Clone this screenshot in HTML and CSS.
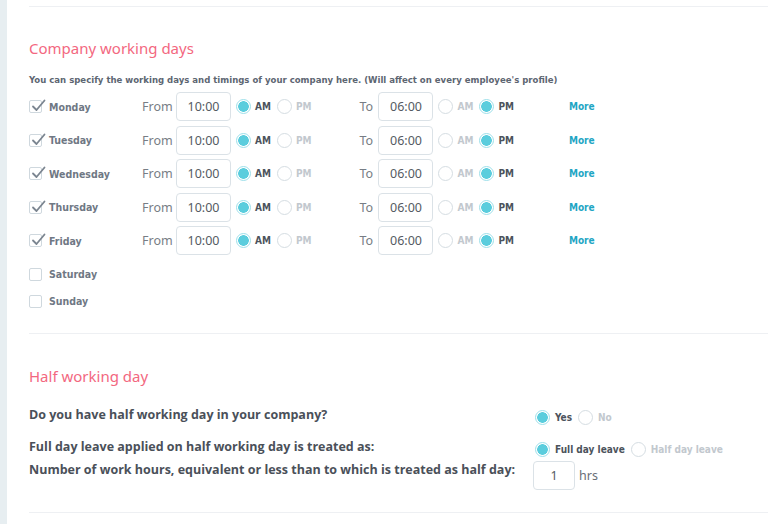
FILE: index.html
```html
<!DOCTYPE html>
<html>
<head>
<meta charset="utf-8">
<link rel="stylesheet" href="styles.css">
</head>
<body>
<div class="page">
  <div class="strip"></div>
  <div class="main">
    <div class="sep"></div>

    <h2 class="title t1">Company working days</h2>
    <p class="desc">You can specify the working days and timings of your company here. (Will affect on every employee's profile)</p>

    <div class="days">
      <div class="day">
        <label class="chk"><span class="box"><svg viewBox="0 0 16 16" width="16" height="16"><path d="M3 8.5 L6.5 12 L14.5 2.5" fill="none" stroke="#7b8590" stroke-width="1.8" stroke-linecap="round" stroke-linejoin="round"/></svg></span><span class="dname">Monday</span></label>
        <span class="lbl from">From</span><span class="tbox">10:00</span>
        <span class="radio on"></span><span class="rl on">AM</span><span class="radio"></span><span class="rl">PM</span>
        <span class="lbl to">To</span><span class="tbox">06:00</span>
        <span class="radio"></span><span class="rl">AM</span><span class="radio on"></span><span class="rl on">PM</span>
        <a class="more">More</a>
      </div>
      <div class="day">
        <label class="chk"><span class="box"><svg viewBox="0 0 16 16" width="16" height="16"><path d="M3 8.5 L6.5 12 L14.5 2.5" fill="none" stroke="#7b8590" stroke-width="1.8" stroke-linecap="round" stroke-linejoin="round"/></svg></span><span class="dname">Tuesday</span></label>
        <span class="lbl from">From</span><span class="tbox">10:00</span>
        <span class="radio on"></span><span class="rl on">AM</span><span class="radio"></span><span class="rl">PM</span>
        <span class="lbl to">To</span><span class="tbox">06:00</span>
        <span class="radio"></span><span class="rl">AM</span><span class="radio on"></span><span class="rl on">PM</span>
        <a class="more">More</a>
      </div>
      <div class="day">
        <label class="chk"><span class="box"><svg viewBox="0 0 16 16" width="16" height="16"><path d="M3 8.5 L6.5 12 L14.5 2.5" fill="none" stroke="#7b8590" stroke-width="1.8" stroke-linecap="round" stroke-linejoin="round"/></svg></span><span class="dname">Wednesday</span></label>
        <span class="lbl from">From</span><span class="tbox">10:00</span>
        <span class="radio on"></span><span class="rl on">AM</span><span class="radio"></span><span class="rl">PM</span>
        <span class="lbl to">To</span><span class="tbox">06:00</span>
        <span class="radio"></span><span class="rl">AM</span><span class="radio on"></span><span class="rl on">PM</span>
        <a class="more">More</a>
      </div>
      <div class="day">
        <label class="chk"><span class="box"><svg viewBox="0 0 16 16" width="16" height="16"><path d="M3 8.5 L6.5 12 L14.5 2.5" fill="none" stroke="#7b8590" stroke-width="1.8" stroke-linecap="round" stroke-linejoin="round"/></svg></span><span class="dname">Thursday</span></label>
        <span class="lbl from">From</span><span class="tbox">10:00</span>
        <span class="radio on"></span><span class="rl on">AM</span><span class="radio"></span><span class="rl">PM</span>
        <span class="lbl to">To</span><span class="tbox">06:00</span>
        <span class="radio"></span><span class="rl">AM</span><span class="radio on"></span><span class="rl on">PM</span>
        <a class="more">More</a>
      </div>
      <div class="day">
        <label class="chk"><span class="box"><svg viewBox="0 0 16 16" width="16" height="16"><path d="M3 8.5 L6.5 12 L14.5 2.5" fill="none" stroke="#7b8590" stroke-width="1.8" stroke-linecap="round" stroke-linejoin="round"/></svg></span><span class="dname">Friday</span></label>
        <span class="lbl from">From</span><span class="tbox">10:00</span>
        <span class="radio on"></span><span class="rl on">AM</span><span class="radio"></span><span class="rl">PM</span>
        <span class="lbl to">To</span><span class="tbox">06:00</span>
        <span class="radio"></span><span class="rl">AM</span><span class="radio on"></span><span class="rl on">PM</span>
        <a class="more">More</a>
      </div>
      <div class="day off first-off">
        <label class="chk"><span class="box"></span><span class="dname">Saturday</span></label>
      </div>
      <div class="day off">
        <label class="chk"><span class="box"></span><span class="dname">Sunday</span></label>
      </div>
    </div>

    <div class="sep sep2"></div>

    <h2 class="title t2">Half working day</h2>

    <div class="q-row q1">
      <div class="q-label">Do you have half working day in your company?</div>
      <div class="q-ctrl">
        <span class="radio on"></span><span class="rl on">Yes</span><span class="radio"></span><span class="rl">No</span>
      </div>
    </div>
    <div class="q-row q2">
      <div class="q-label">Full day leave applied on half working day is treated as:</div>
      <div class="q-ctrl">
        <span class="radio on"></span><span class="rl on">Full day leave</span><span class="radio"></span><span class="rl">Half day leave</span>
      </div>
    </div>
    <div class="q-row q3">
      <div class="q-label">Number of work hours, equivalent or less than to which is treated as half day:</div>
      <div class="q-ctrl">
        <span class="tbox hbox">1</span><span class="hrs">hrs</span>
      </div>
    </div>

    <div class="sep sep3"></div>
  </div>
</div>
</body>
</html>
```

FILE: styles.css
```css
html, body {
  margin: 0;
  padding: 0;
  background: #ffffff;
}

.page {
  display: flex;
  min-height: 524px;
}

.strip {
  width: 7px;
  background: #e7eef1;
  flex: none;
}

.main {
  flex: 1;
  padding: 6px 0 0 22px;
}

.sep {
  height: 1px;
  background: #eef0f3;
}

.title {
  margin: 0;
  font-family: "Noto Sans", "Open Sans", sans-serif;
  font-weight: 400;
  font-size: 15px;
  line-height: 20px;
  color: #f3687f;
}

.t1 { margin-top: 31px; }
.t2 { margin-top: 32px; }

.desc {
  margin: 15px 0 0 0;
  font-family: "DejaVu Sans Condensed", "DejaVu Sans", sans-serif;
  font-stretch: condensed;
  font-weight: 700;
  font-size: 9.5px;
  line-height: 14px;
  color: #5d6672;
  white-space: nowrap;
}

.days {
  margin-top: 5px;
  display: flex;
  flex-direction: column;
}

.day {
  display: flex;
  align-items: center;
  height: 29px;
  margin-bottom: 4.6px;
}

.day.off {
  height: 27px;
  margin-bottom: 0;
}

.day.first-off { margin-top: 1px; }

.chk {
  display: flex;
  align-items: center;
  width: 113px;
  flex: none;
}

.box {
  position: relative;
  width: 11px;
  height: 11px;
  border: 1px solid #cfd8de;
  border-radius: 2px;
  background: #fff;
  margin-right: 7px;
  flex: none;
}

.box svg {
  position: absolute;
  left: 0;
  top: -3px;
}

.dname {
  font-family: "DejaVu Sans Condensed", "DejaVu Sans", sans-serif;
  font-stretch: condensed;
  font-weight: 700;
  font-size: 10.5px;
  color: #6f7884;
}

.lbl {
  font-family: "Noto Sans", "Open Sans", sans-serif;
  font-size: 12.5px;
  color: #777d85;
}

.from { width: 34px; }
.to {
  width: 19px;
  margin-left: 42px;
}

.tbox {
  display: inline-flex;
  align-items: center;
  justify-content: center;
  box-sizing: border-box;
  width: 55px;
  height: 29px;
  border: 1px solid #dbe2e7;
  border-radius: 4px;
  font-family: "Noto Sans", "Open Sans", sans-serif;
  font-size: 12.5px;
  color: #555b63;
  margin-right: 5px;
  flex: none;
}

.radio {
  box-sizing: border-box;
  width: 15px;
  height: 15px;
  border-radius: 50%;
  border: 1px solid #d5dde2;
  background: #fff;
  flex: none;
}

.radio.on {
  border: 1px solid #9ee0ea;
  background: radial-gradient(circle, #5bcddd 0 5px, #ffffff 5.6px);
}

.rl {
  font-family: "DejaVu Sans Condensed", "DejaVu Sans", sans-serif;
  font-stretch: condensed;
  font-weight: 700;
  font-size: 10px;
  color: #c2c8ce;
  margin: 0 6px 0 4px;
}

.rl.on { color: #4c535c; }

.more {
  margin-left: 49px;
  font-family: "DejaVu Sans Condensed", "DejaVu Sans", sans-serif;
  font-stretch: condensed;
  font-weight: 700;
  font-size: 10px;
  color: #1fa6c4;
}

.sep2 { margin-top: 18.5px; }

.q-row {
  display: flex;
  align-items: flex-start;
}

.q-label {
  width: 504px;
  flex: none;
  font-family: "Open Sans", "Noto Sans", sans-serif;
  font-weight: 700;
  font-size: 12.5px;
  line-height: 18px;
  color: #4a5059;
  white-space: nowrap;
}

.q-ctrl {
  display: flex;
  align-items: center;
  padding-left: 2px;
}

.q-ctrl .rl { margin-left: 5px; }

.q1 { margin-top: 20px; }
.q1 .q-ctrl { margin-top: 4px; }
.q2 { margin-top: 13px; }
.q2 .q-ctrl { margin-top: 4px; }
.q3 { margin-top: 4px; height: 31px; }
.q3 .q-ctrl { margin-top: 0; padding-left: 0; }

.hbox {
  width: 42px;
  margin-right: 4px;
}

.hrs {
  font-family: "Noto Sans", "Open Sans", sans-serif;
  font-size: 12.5px;
  color: #686e76;
}

.sep3 { margin-top: 20px; }
```
